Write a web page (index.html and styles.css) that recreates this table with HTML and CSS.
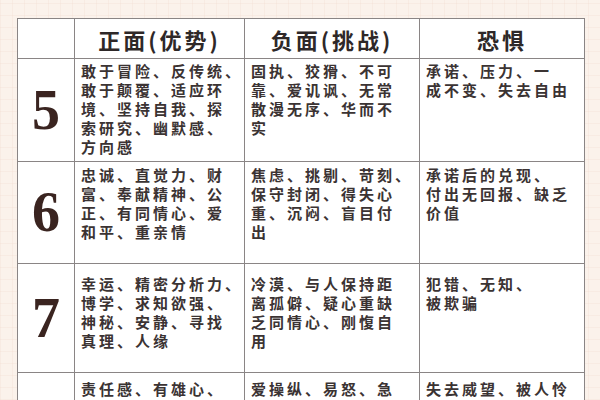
FILE: index.html
```html
<!DOCTYPE html>
<html lang="zh">
<head>
<meta charset="utf-8">
<link rel="stylesheet" href="styles.css">
</head>
<body>
<div class="page">
  <table class="grid">
    <colgroup>
      <col class="c-num"><col class="c-pos"><col class="c-neg"><col class="c-fear">
    </colgroup>
    <thead>
      <tr class="head">
        <th></th>
        <th>正面(优势)</th>
        <th>负面(挑战)</th>
        <th>恐惧</th>
      </tr>
    </thead>
    <tbody>
      <tr class="r5">
        <td class="num">5</td>
        <td>敢于冒险、反传统、<br>敢于颠覆、适应环<br>境、坚持自我、探<br>索研究、幽默感、<br>方向感</td>
        <td>固执、狡猾、不可<br>靠、爱讥讽、无常<br>散漫无序、华而不<br>实</td>
        <td>承诺、压力、一<br>成不变、失去自由</td>
      </tr>
      <tr class="r6">
        <td class="num">6</td>
        <td>忠诚、直觉力、财<br>富、奉献精神、公<br>正、有同情心、爱<br>和平、重亲情</td>
        <td>焦虑、挑剔、苛刻、<br>保守封闭、得失心<br>重、沉闷、盲目付<br>出</td>
        <td>承诺后的兑现、<br>付出无回报、缺乏<br>价值</td>
      </tr>
      <tr class="r7">
        <td class="num">7</td>
        <td>幸运、精密分析力、<br>博学、求知欲强、<br>神秘、安静、寻找<br>真理、人缘</td>
        <td>冷漠、与人保持距<br>离孤僻、疑心重缺<br>乏同情心、刚愎自<br>用</td>
        <td>犯错、无知、<br>被欺骗</td>
      </tr>
      <tr class="r8">
        <td class="num">8</td>
        <td>责任感、有雄心、<br>愿助他人、领导力</td>
        <td>爱操纵、易怒、急<br>于求成、好权力</td>
        <td>失去威望、被人怜<br>悯、无能、失败</td>
      </tr>
    </tbody>
  </table>
</div>
</body>
</html>
```

FILE: styles.css
```css
html, body {
  margin: 0;
  padding: 0;
}
body {
  width: 600px;
  height: 400px;
  overflow: hidden;
  background-color: #fbf2eb;
  background-image:
    repeating-linear-gradient(0deg, rgba(235, 205, 190, 0.18) 0 1px, transparent 1px 12px),
    repeating-linear-gradient(90deg, rgba(235, 205, 190, 0.18) 0 1px, transparent 1px 12px);
}
.page {
  padding: 18px 0 0 17px;
}
.grid {
  border-collapse: collapse;
  table-layout: fixed;
  width: 567px;
  background: #ffffff;
  font-family: "Noto Sans CJK SC", sans-serif;
  color: #3b3333;
}
.c-num { width: 57px; }
.c-pos { width: 170px; }
.c-neg { width: 175px; }
.c-fear { width: 165px; }
.grid th, .grid td {
  border: 1.5px solid #8a8585;
  padding: 0;
}
.head th {
  height: 39px;
  font-size: 22px;
  font-weight: 700;
  letter-spacing: 3px;
  text-align: center;
  vertical-align: middle;
  color: #2e2828;
}
.grid td {
  vertical-align: top;
  font-size: 15px;
  font-weight: 700;
  line-height: 19px;
  letter-spacing: 3px;
  white-space: nowrap;
  padding-left: 6px;
}
.grid td.num {
  font-family: "Liberation Serif", serif;
  font-size: 56px;
  font-weight: 700;
  color: #3a2420;
  text-align: center;
  vertical-align: middle;
  letter-spacing: 0;
  padding: 0;
}
.r5 td { height: 100px; padding-top: 2px; }
.r6 td { height: 98px; padding-top: 3px; }
.r7 td { height: 98px; padding-top: 10px; }
.r8 td { height: 100px; padding-top: 6px; }
```
